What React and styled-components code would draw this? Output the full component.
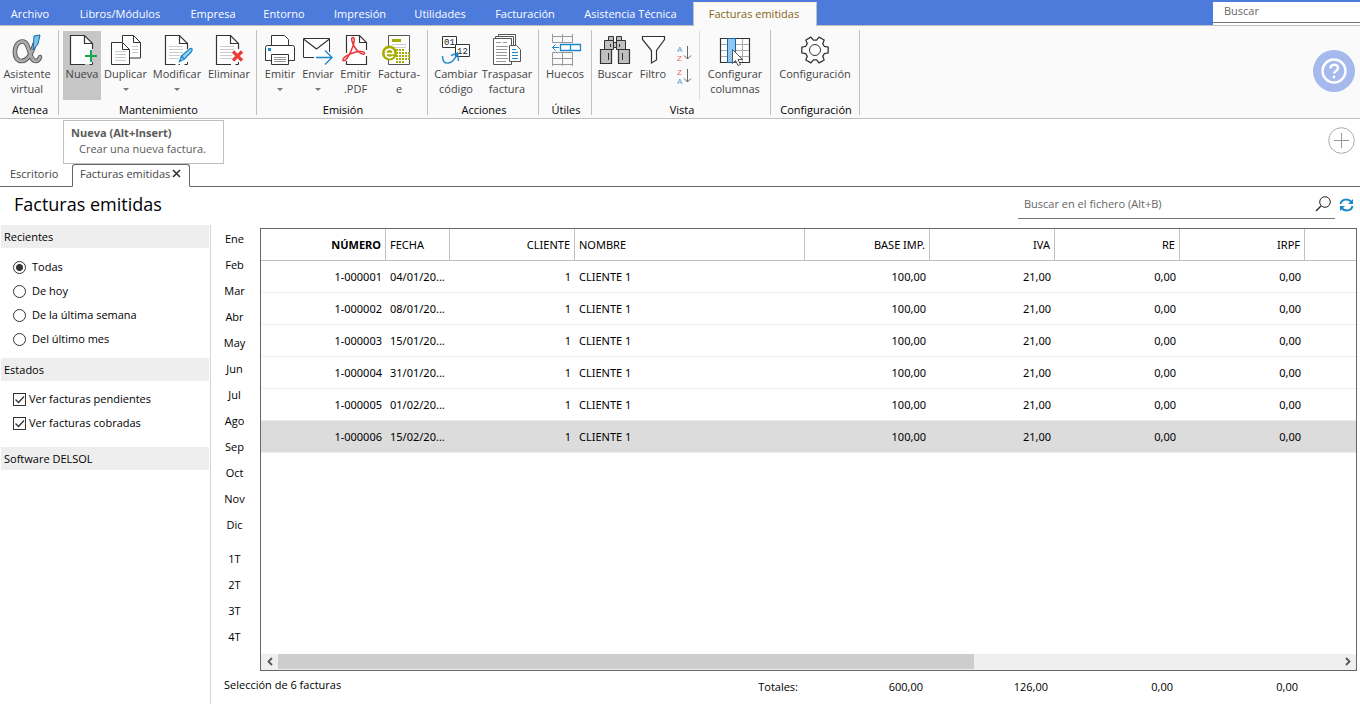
import React from "react";
import styled, { createGlobalStyle, css } from "styled-components";

const Global = createGlobalStyle`
  * { box-sizing: border-box; }
  body { margin: 0; background: #fff; color: #000; font: 11px/15px "Open Sans", "Noto Sans", sans-serif; }
  button, input { font: inherit; color: inherit; }
  button { padding: 0; border: 0; background: none; cursor: default; }
  h1, h2 { margin: 0; font-weight: 400; }
`;

const Shell = styled.div`
  display: flex;
  flex-direction: column;
  min-height: 100vh;
`;

/* ---------- menu bar ---------- */
const MenuBar = styled.nav`
  display: flex;
  height: 25px;
  background: #4d7bdc;
`;
const MenuItem = styled.button`
  flex: none;
  width: ${(p) => p.$width}px;
  height: 25px;
  padding-top: 2px;
  color: #fff;
  white-space: nowrap;
  ${(p) =>
    p.$active &&
    css`
      height: 24px;
      margin-top: 2px;
      padding: 0 2px 2px 0;
      background: #fafafa;
      color: #87640f;
      border: 1px solid #c0c0c0;
      border-top-color: #fbf3dc;
      border-bottom: 0;
      position: relative;
    `}
`;
const MenuSearch = styled.div`
  width: 147px;
  height: 23px;
  margin: 2px 0 0 auto;
  padding-bottom: 2px;
  background: #fff;
  input {
    display: block;
    width: 100%;
    height: 21px;
    padding: 0 11px 4px;
    border: 0;
    border-bottom: 1px solid #777;
    outline: 0;
    background: #fff;
  }
  input::placeholder { color: #666; opacity: 1; }
`;

/* ---------- ribbon ---------- */
const Ribbon = styled.section`
  display: flex;
  height: 94px;
  background: #fafafa;
  border-top: 1px solid #c0c0c0;
  border-bottom: 1px solid #c0c0c0;
`;
const Group = styled.div`
  flex: none;
  display: flex;
  flex-direction: column;
  justify-content: space-between;
  width: ${(p) => p.$width}px;
  height: 85px;
  margin-top: 4px;
  border-right: 1px solid #c0c0c0;
`;
const GroupBody = styled.div`
  display: flex;
  padding: ${(p) => (p.$flush ? "1px 0 0" : "1px 0 0 4px")};
`;
const GroupName = styled.div`
  padding-left: 2px;
  text-align: center;
  height: 12px;
  line-height: 13px;
`;
const Tool = styled.button`
  flex: none;
  display: flex;
  flex-direction: column;
  align-items: center;
  width: ${(p) => p.$width}px;
  height: 69px;
  padding-top: 2px;
  color: #444;
  background: ${(p) => (p.$active ? "#c6c6c6" : "transparent")};
  svg { flex: none; display: block; }
`;
const ToolText = styled.span`
  display: block;
  margin-top: -1px;
  white-space: nowrap;
  text-align: center;
`;
const Caret = styled.i`
  margin-top: 7px;
  border: 3px solid transparent;
  border-top-color: #777;
  border-bottom: 0;
`;
const SortStack = styled.div`
  display: flex;
  flex-direction: column;
  gap: 3px;
  width: 28px;
  padding: 13px 0 0 3px;
  border-right: 1px solid #dcdcdc;
  margin-right: 3px;
  svg { display: block; }
`;
const HelpButton = styled.button`
  width: 42px;
  height: 42px;
  margin: 24px 5px 0 auto;
  border-radius: 50%;
  background: #a5b9ec;
  svg { display: block; }
`;

/* ---------- document tabs ---------- */
const TabStrip = styled.div`
  position: relative;
  display: flex;
  align-items: flex-end;
  height: 68px;
`;
const DocTab = styled.div`
  display: flex;
  align-items: center;
  gap: 2px;
  height: 23px;
  color: #444;
  border-bottom: 1px solid #666;
  ${(p) =>
    p.$active
      ? css`
          width: 118px;
          padding: 0 7px 4px;
          border: 1px solid #666;
          border-bottom-color: transparent;
          border-radius: 3px 3px 0 0;
        `
      : css`
          width: 72px;
          padding: 0 0 3px 10px;
        `}
  button { white-space: nowrap; }
  svg { display: block; }
`;
const StripRest = styled.div`
  flex: 1;
  display: flex;
  justify-content: flex-end;
  align-items: flex-start;
  height: 68px;
  padding: 7px 5px 0;
  border-bottom: 1px solid #666;
  svg { display: block; }
`;
const Tooltip = styled.div`
  position: absolute;
  left: 63px;
  top: 1px;
  width: 161px;
  height: 44px;
  padding: 4px 7px;
  background: #fff;
  border: 1px solid #c0c0c0;
  color: #5a5a5a;
  line-height: 16px;
  b { display: block; font-weight: 700; }
  span { padding-left: 8px; }
`;

/* ---------- heading ---------- */
const Heading = styled.header`
  display: flex;
  justify-content: space-between;
  height: 38px;
  padding: 0 6px 0 14px;
  h1 { font-size: 18px; line-height: 35px; }
`;
const Finder = styled.div`
  display: flex;
  height: 32px;
  label {
    display: flex;
    align-items: center;
    width: 317px;
    padding: 2px 4px 0 6px;
    border-bottom: 1px solid #777;
  }
  input { flex: 1; min-width: 0; padding: 0; border: 0; outline: 0; background: none; }
  input::placeholder { color: #666; opacity: 1; }
  > button { display: flex; align-items: center; padding: 4px 0 0 4px; }
`;

/* ---------- body ---------- */
const Body = styled.main`
  flex: 1;
  display: flex;
`;
const Sidebar = styled.aside`
  flex: none;
  width: 211px;
  padding: 0 1px;
  border-right: 1px solid #d4d4d4;
`;
const Section = styled.section`
  h2 {
    height: 23px;
    padding-left: 3px;
    font-size: 11px;
    line-height: 24px;
    background: #eee;
  }
`;
const Options = styled.div`
  padding: ${(p) => (p.$checks ? "6px 0 12px 12px" : "7px 0 7px 12px")};
`;
const Option = styled.label`
  display: flex;
  align-items: center;
  gap: ${(p) => (p.$tight ? 3 : 6)}px;
  height: 24px;
  input {
    appearance: none;
    width: 13px;
    height: 13px;
    margin: 0;
    border: 1px solid #333;
    background: #fff;
  }
  input[type="radio"] { border-radius: 50%; }
  input[type="radio"]:checked { background: radial-gradient(circle, #333 3px, #fff 4px); }
`;
const OptionText = styled.span`
  padding-bottom: 2px;
`;
const CheckWrap = styled.span`
  display: grid;
  > * { grid-area: 1 / 1; }
  svg { pointer-events: none; z-index: 1; }
`;
const Periods = styled.div`
  flex: none;
  display: flex;
  flex-direction: column;
  width: 49px;
  padding-right: 2px;
`;
const Period = styled.button`
  height: 26px;
  margin-top: ${(p) => (p.$first ? 8 : 0)}px;
`;
const Right = styled.div`
  flex: 1;
  min-width: 0;
  display: flex;
  flex-direction: column;
`;
const Upper = styled.div`
  flex: 1;
  display: flex;
`;
const Frame = styled.div`
  flex: 1;
  min-width: 0;
  display: flex;
  flex-direction: column;
  justify-content: space-between;
  margin: 3px 3px 0 0;
  border: 1px solid #666;
`;
const Table = styled.table`
  width: 100%;
  table-layout: fixed;
  border-collapse: separate;
  border-spacing: 0;
  font-family: "Noto Sans", "Open Sans", sans-serif;
`;
const cell = css`
  height: 32px;
  padding: 0 4px 1px;
  text-align: ${(p) => (p.$left ? "left" : "right")};
  white-space: nowrap;
  overflow: hidden;
`;
const Th = styled.th`
  ${cell}
  font-weight: ${(p) => (p.$bold ? 700 : 400)};
  border-right: 1px solid #c0c0c0;
  border-bottom: 1px solid #c0c0c0;
  &:last-child { border-right: 0; }
`;
const Td = styled.td`
  ${cell}
  border-bottom: 1px solid #ededed;
`;
const Tr = styled.tr`
  background: ${(p) => (p.$selected ? "#dcdcdc" : "#fff")};
`;
const ScrollBar = styled.div`
  display: flex;
  height: 16px;
  padding-bottom: 1px;
  background: #efefef;
  button { display: grid; place-items: center; width: 17px; }
  svg { display: block; }
`;
const Track = styled.div`
  flex: 1;
  i { display: block; width: 65.6%; height: 15px; background: #cdcdcd; }
`;
const Footer = styled.footer`
  display: flex;
  height: 33px;
  padding-left: 13px;
  line-height: 28px;
`;
const Total = styled.span`
  width: 125px;
  padding-top: 2px;
  text-align: right;
`;
const Summary = styled.span`
  width: 449px;
`;

/* ---------- icons ---------- */
const Icon = ({ children, w = 36, h = 34 }) => (
  <svg width={w} height={h} viewBox={`0 0 ${w} ${h}`} fill="none" aria-hidden="true">
    {children}
  </svg>
);
const K = "#333";
const BLUE = "#1e88cc";

const alpha = "M25.500 11C23 21 18 28 12.500 28C3 28 4 8.500 13.500 8.500C21.500 8.500 19.500 28 26.500 28C29 28 30.500 26 31 24";
const AlphaIcon = () => (
  <Icon>
    <g strokeLinecap="round">
      <path d={alpha} stroke="#555" strokeWidth="4.600" />
      <path d={alpha} stroke="#aaa" strokeWidth="2.800" />
    </g>
    <path d="M25 3L31 2L29 11L24 17Z" fill="#7cc2ee" stroke="#1767a8" />
  </Icon>
);
const Page = ({ x = 6 }) => (
  <>
    <path d={`M${x + 0.5} 2.5h14l8 8v20.5h-22z`} fill="#fff" />
    <path d={`M${x + 22.5} 16V10.5L${x + 14.5} 2.5H${x + 0.5}V31.5H${x + 15}`} stroke={K} strokeWidth="1.2" />
    <path d={`M${x + 22.5} 29v2.5h-3`} stroke={K} />
    <path d={`M${x + 14.5} 3v7.500h8`} stroke={K} strokeWidth="1.2" />
  </>
);
const NewIcon = () => (
  <Icon>
    <Page />
    <path d="M27 17v12M21 23h12" stroke="#c6c6c6" strokeWidth="4" />
    <path d="M20 17h7v6h-7z" fill="#fff" />
    <path d="M20 23h6v6h-6z" fill="#fff" />
    <path d="M27 17v12M21 23h12" stroke="#12a84c" strokeWidth="2" />
  </Icon>
);
const Lines = ({ x, y, n, w = 14 }) => (
  <path d={Array.from({ length: n }, (_, i) => `M${x} ${y + i * 3 + 0.5}h${w}`).join("")} stroke="#ccc" />
);
const CopyIcon = () => (
  <Icon>
    <path d="M14.500 9V2.500h11l7 7v15.500h-11" fill="#fff" stroke={K} />
    <path d="M25.500 3v6.500h7" stroke={K} />
    <Lines x={24} y={13} n={3} w={6} />
    <path d="M3.500 9.500h11l7 7v15h-18z" fill="#fff" stroke={K} />
    <path d="M14.500 10v6.500h7" stroke={K} />
    <Lines x={7} y={18} n={4} w={11} />
  </Icon>
);
const EditIcon = () => (
  <Icon>
    <Page />
    <Lines x={10} y={13} n={5} w={14} />
    <path d="M20 29l3-6L31 17l2 1-8 8z" fill="#fff" stroke="#fff" strokeWidth="4" />
    <path d="M20.500 28.500l2-5.500L30.500 16q2-1 2.500 0t-.5 2.500l-7 7.500zM22.500 23l3 3" fill="#9bd0f2" stroke={BLUE} strokeWidth="1.3" />
  </Icon>
);
const DeleteIcon = () => (
  <Icon>
    <Page x={5} />
    <Lines x={9} y={13} n={5} w={14} />
    <path d="M22 19l9 8M31 19l-9 8" stroke="#fff" strokeWidth="6" />
    <path d="M22 18.500l9 9M31 18.500l-9 9" stroke="#ee3b3b" strokeWidth="3.2" />
  </Icon>
);
const PrintIcon = () => (
  <Icon>
    <path d="M9.500 12V2.500h13l4 4V12" fill="#fff" stroke={K} />
    <path d="M9.500 27.500h-6v-13q0-2 2-2h25q2 0 2 2v13h-6" fill="#fff" stroke={K} />
    <path d="M9.500 21.500h17v10h-17z" fill="#fff" stroke={K} />
    <path d="M12 24.500h12M12 26.500h12M12 28.500h12" stroke="#999" />
    <path d="M6 15h3v3h-3z" fill={BLUE} />
  </Icon>
);
const MailIcon = () => (
  <Icon>
    <path d="M14 24.500H3.500V5.500h26V20" fill="#fff" />
    <path d="M14 24.500H3.500V5.500h26V19" stroke={K} />
    <path d="M3.500 6l13 10 13-10" stroke={K} strokeWidth="1.2" />
    <path d="M16 24.500h16M25 17.500l7 7-7 7" stroke={BLUE} strokeWidth="1.4" />
  </Icon>
);
const PdfIcon = () => (
  <Icon>
    <path d="M8.500 2.500h13l7 7v22h-20z" fill="#fff" />
    <path d="M8.500 20V2.500h13l7 7V17M28.500 23v8.500h-20V28M21.500 3v6.500h7" stroke={K} strokeWidth="1.2" />
    <path d="M5 27.500c-1-3 7-7 13-8.500 5-1 9-.5 8.500 1.500-1.500 2-7-1.500-10-6.500C14 9.500 12.500 4.500 15 4.500c2.500 0 1 7-2 13.500-2 5-6 11-8 9.500z" stroke="#e83434" strokeWidth="1.500" />
  </Icon>
);
const dots = [];
for (let r = 0; r < 5; r++)
  for (let c = 0; c < 5; c++) if (r % 4 || c < 3) dots.push([15 + c * 3, 16 + r * 3]);
const EInvoiceIcon = () => (
  <Icon>
    <path d="M7.500 2.500h21v29h-21z" fill="#fff" stroke="#555" />
    <Lines x={11} y={11} n={2} w={14} />
    <path d="M11 6h9v3h-9z" fill="#a6ac00" />
    <circle cx="8.500" cy="20" r="7.500" fill="#a6ac00" />
    <path d="M4.500 20.500h8c0-6-8-5.500-8 0c0 4.500 5.500 5 7.500 2.500" stroke="#fff" strokeWidth="1.700" />
    {dots.map(([x, y]) => (
      <rect key={`${x}-${y}`} x={x} y={y} width="2" height="2" fill="#a6ac00" />
    ))}
  </Icon>
);
const CodeIcon = () => (
  <Icon>
    <path d="M4.500 3.500h14v11h-14z" fill="#fff" stroke={K} />
    <path d="M17.500 11.500h14v12h-14z" fill="#fff" stroke={K} />
    <g fontFamily="Liberation Mono, monospace" fontSize="9" fill="#222">
      <text x="6" y="12">01</text>
      <text x="19" y="21">12</text>
    </g>
    <path d="M4.500 23q0 8 6 7c5-1 7-5 8.500-9M13 22.500l6.500-2.500 1 8" stroke={BLUE} strokeWidth="1.4" />
  </Icon>
);
const TransferIcon = () => (
  <Icon>
    <path d="M9.500 3V1.500h17V12" fill="#fff" stroke="#555" />
    <path d="M6.500 5V3.500h18V12" fill="#fff" stroke="#555" />
    <path d="M4.500 5.500h18v26h-18z" fill="#fff" stroke="#555" />
    <path d="M7 9.500h5M14 9.500h4M7 13.500h12M7 16.500h11M7 19.500h11M7 22.500h11M7 25.500h12M7 28.500h10" stroke="#999" />
    <path d="M20.500 12.500h7l4 4v12h-11z" fill="#fff" stroke="#555" />
    <path d="M23 16.500h4M23 19.500h6M23 22.500h6M23 25.500h6" stroke={BLUE} />
  </Icon>
);
const GapsIcon = () => (
  <Icon>
    <path d="M5.500 1v8.500h20V1M5.500 3.500h20M15.500 1v8M5.500 33V19.500h20V33M5.500 25.500h20M5.500 31.500h20M15.500 20v13" stroke="#999" />
    <path d="M13.500 11.500h20v6h-20zM23.500 11.500v6" fill="#fff" stroke={BLUE} strokeWidth="1.3" />
    <path d="M12 14.500H5.500M8.500 11.500l-3 3 3 3" stroke={BLUE} />
  </Icon>
);
const BinocularsIcon = () => (
  <Icon>
    <path d="M11.500 3.500h5v4h-5zM19.500 3.500h5v4h-5zM7.500 7.500h9v9h-9zM19.500 7.500h9v9h-9zM16.500 9.500h3v5h-3z" fill="#c2c0be" stroke={K} />
    <path d="M3.500 16.500h11v14h-11zM21.500 16.500h11v14h-11z" fill="#c2c0be" stroke={K} strokeWidth="1.2" />
    <path d="M11.500 20v7M25.500 20v7M13.500 11v3M22.500 11v3" stroke={K} />
  </Icon>
);
const FunnelIcon = () => (
  <Icon>
    <path d="M7.500 3.500h22v3l-8 11V27l-5 3V17.500l-9-11z" fill="#fff" stroke={K} strokeWidth="1.2" />
  </Icon>
);
const SortIcon = ({ top, bottom, topColor, bottomColor }) => (
  <svg width="20" height="20" viewBox="0 0 20 20" fill="none" aria-hidden="true">
    <g fontFamily="Liberation Sans, sans-serif" fontSize="8">
      <text x="2" y="8" fill={topColor}>{top}</text>
      <text x="2" y="17" fill={bottomColor}>{bottom}</text>
    </g>
    <path d="M12.500 2v13M9 11.500l3.500 3.500 3.500-3.500" stroke="#666" />
  </svg>
);
const ColumnsIcon = () => (
  <Icon>
    <path d="M3.500 5.500h29v24h-29z" fill="#fff" stroke={K} strokeWidth="1.2" />
    <path d="M4 11.500h28M4 17.500h28M4 23.500h28M25.500 6v23M18.500 6v23" stroke="#aaa" />
    <path d="M10.500 5.500h8v24h-8z" fill="#90c8f2" stroke="#1565a8" />
    <path d="M15.500 16.500v14l3-3 2.500 5 2.500-1-2.500-5h4.500z" fill="#fff" stroke="#555" />
  </Icon>
);
const gearPath = (() => {
  const p = [];
  for (let i = 0; i < 6; i++) {
    const a = (i * Math.PI) / 3;
    [[-0.36, 10], [-0.22, 13.5], [0.22, 13.5], [0.36, 10]].forEach(([d, r]) =>
      p.push(`${(18 + r * Math.cos(a + d)).toFixed(2)} ${(17 + r * Math.sin(a + d)).toFixed(2)}`)
    );
  }
  return `M${p.join("L")}Z`;
})();
const GearIcon = () => (
  <Icon>
    <path d={gearPath} fill="#fff" stroke={K} strokeWidth="1.300" strokeLinejoin="round" />
    <circle cx="18" cy="17" r="5.500" stroke={K} />
  </Icon>
);
const HelpIcon = () => (
  <svg width="42" height="42" viewBox="0 0 42 42" fill="none" aria-hidden="true">
    <circle cx="21" cy="21" r="11.500" stroke="#fff" strokeWidth="2.400" />
    <path d="M17.500 18.500c0-5 7.500-5 7.500-.5 0 3-4 2.800-4 5.500" stroke="#fff" strokeWidth="2.400" />
    <circle cx="21" cy="27" r="1.400" fill="#fff" />
  </svg>
);
const AddIcon = () => (
  <svg width="28" height="28" viewBox="0 0 28 28" fill="none" aria-hidden="true">
    <circle cx="14.500" cy="14.500" r="12.800" stroke="#aaa" />
    <path d="M14.500 7v15M7 14.500h15" stroke="#999" />
  </svg>
);
const CloseIcon = () => (
  <svg width="9" height="9" viewBox="0 0 9 9" aria-hidden="true">
    <path d="M1 1l7 7M8 1L1 8" stroke="#333" strokeWidth="1.600" />
  </svg>
);
const LensIcon = () => (
  <svg width="16" height="16" viewBox="0 0 16 16" fill="none" aria-hidden="true">
    <circle cx="10" cy="6" r="5.300" stroke="#222" />
    <path d="M6 10l-5 5" stroke="#222" strokeWidth="1.300" />
  </svg>
);
const RefreshIcon = () => (
  <svg width="15" height="14" viewBox="0 0 15 14" fill="none" aria-hidden="true">
    <path d="M1.500 6C2.500 1 9 0 12.500 4M13.500 8C12.500 13 6 14 2.500 10" stroke="#1e88cc" strokeWidth="2" />
    <path d="M14 1v5h-5zM1 13V8h5z" fill="#1e88cc" />
  </svg>
);
const CheckMark = () => (
  <svg width="13" height="13" viewBox="0 0 13 13" fill="none" aria-hidden="true">
    <path d="M2.500 6.500l3 3 5.500-6" stroke="#333" strokeWidth="1.300" />
  </svg>
);
const Chevron = ({ right }) => (
  <svg width="8" height="9" viewBox="0 0 8 9" fill="none" aria-hidden="true">
    <path d={right ? "M2 1l3.500 3.500L2 8" : "M6 1L2.500 4.500 6 8"} stroke="#555" strokeWidth="1.800" />
  </svg>
);

/* ---------- data ---------- */
const menu = [
  ["Archivo", 60], ["Libros/Módulos", 120], ["Empresa", 66], ["Entorno", 76], ["Impresión", 76],
  ["Utilidades", 84], ["Facturación", 86], ["Asistencia Técnica", 125], ["Facturas emitidas", 124, true],
];
const groups = [
  { name: "Atenea", width: 59, flush: true, tools: [["Asistente\nvirtual", 54, AlphaIcon]] },
  {
    name: "Mantenimiento", width: 198,
    tools: [["Nueva", 38, NewIcon, { active: true }], ["Duplicar", 49, CopyIcon, { caret: true }],
      ["Modificar", 54, EditIcon, { caret: true }], ["Eliminar", 50, DeleteIcon]],
  },
  {
    name: "Emisión", width: 171,
    tools: [["Emitir", 38, PrintIcon, { caret: true }], ["Enviar", 38, MailIcon, { caret: true }],
      ["Emitir\n.PDF", 37, PdfIcon], ["Factura-\ne", 50, EInvoiceIcon]],
  },
  { name: "Acciones", width: 111, tools: [["Cambiar\ncódigo", 48, CodeIcon], ["Traspasar\nfactura", 54, TransferIcon]] },
  { name: "Útiles", width: 53, tools: [["Huecos", 44, GapsIcon]] },
  {
    name: "Vista", width: 179, sort: true,
    tools: [["Buscar", 38, BinocularsIcon], ["Filtro", 38, FunnelIcon], ["Configurar\ncolumnas", 64, ColumnsIcon]],
  },
  { name: "Configuración", width: 89, tools: [["Configuración", 80, GearIcon]] },
];
const months = ["Ene", "Feb", "Mar", "Abr", "May", "Jun", "Jul", "Ago", "Sep", "Oct", "Nov", "Dic"];
const quarters = ["1T", "2T", "3T", "4T"];
const columns = [
  ["NÚMERO", 125], ["FECHA", 64, true], ["CLIENTE", 125], ["NOMBRE", 230, true],
  ["BASE IMP.", 125], ["IVA", 125], ["RE", 125], ["IRPF", 125], ["", null],
];
const rows = [
  ["1-000001", "04/01/20..."], ["1-000002", "08/01/20..."], ["1-000003", "15/01/20..."],
  ["1-000004", "31/01/20..."], ["1-000005", "01/02/20..."], ["1-000006", "15/02/20..."],
].map((r) => [...r, "1", "CLIENTE 1", "100,00", "21,00", "0,00", "0,00", ""]);
const recent = ["Todas", "De hoy", "De la última semana", "Del último mes"];
const states = ["Ver facturas pendientes", "Ver facturas cobradas"];
const totals = ["Totales:", "600,00", "126,00", "0,00", "0,00"];

const RibbonTool = ({ tool: [label, width, Glyph, opts = {}] }) => (
  <Tool type="button" $width={width} $active={opts.active}>
    <Glyph />
    <ToolText>
      {label.split("\n").map((t, i) => (
        <React.Fragment key={t}>{i > 0 && <br />}{t}</React.Fragment>
      ))}
    </ToolText>
    {opts.caret && <Caret />}
  </Tool>
);

export default function App() {
  return (
    <Shell>
      <Global />
      <MenuBar>
        {menu.map(([label, width, active]) => (
          <MenuItem key={label} type="button" $width={width} $active={active}>{label}</MenuItem>
        ))}
        <MenuSearch><input type="text" placeholder="Buscar" aria-label="Buscar" /></MenuSearch>
      </MenuBar>

      <Ribbon>
        {groups.map((g) => (
          <Group key={g.name} $width={g.width}>
            <GroupBody $flush={g.flush}>
              {g.tools.map((t, i) => (
                <React.Fragment key={t[0]}>
                  {g.sort && i === 2 && (
                    <SortStack>
                      <button type="button" aria-label="Orden ascendente">
                        <SortIcon top="A" bottom="Z" topColor="#4a9fd8" bottomColor="#ee5a5a" />
                      </button>
                      <button type="button" aria-label="Orden descendente">
                        <SortIcon top="Z" bottom="A" topColor="#ee5a5a" bottomColor="#4a9fd8" />
                      </button>
                    </SortStack>
                  )}
                  <RibbonTool tool={t} />
                </React.Fragment>
              ))}
            </GroupBody>
            <GroupName>{g.name}</GroupName>
          </Group>
        ))}
        <HelpButton type="button" aria-label="Ayuda"><HelpIcon /></HelpButton>
      </Ribbon>

      <TabStrip>
        <DocTab><button type="button">Escritorio</button></DocTab>
        <DocTab $active>
          <button type="button">Facturas emitidas</button>
          <button type="button" aria-label="Cerrar"><CloseIcon /></button>
        </DocTab>
        <StripRest><button type="button" aria-label="Añadir"><AddIcon /></button></StripRest>
        <Tooltip role="tooltip"><b>Nueva (Alt+Insert)</b><span>Crear una nueva factura.</span></Tooltip>
      </TabStrip>

      <Heading>
        <h1>Facturas emitidas</h1>
        <Finder>
          <label>
            <input type="text" placeholder="Buscar en el fichero (Alt+B)" aria-label="Buscar en el fichero" />
            <LensIcon />
          </label>
          <button type="button" aria-label="Actualizar"><RefreshIcon /></button>
        </Finder>
      </Heading>

      <Body>
        <Sidebar>
          <Section>
            <h2>Recientes</h2>
            <Options>
              {recent.map((label, i) => (
                <Option key={label}>
                  <input type="radio" name="recent" defaultChecked={i === 0} />
                  <OptionText>{label}</OptionText>
                </Option>
              ))}
            </Options>
          </Section>
          <Section>
            <h2>Estados</h2>
            <Options $checks>
              {states.map((label) => (
                <Option key={label} $tight>
                  <CheckWrap><input type="checkbox" defaultChecked /><CheckMark /></CheckWrap>
                  <OptionText>{label}</OptionText>
                </Option>
              ))}
            </Options>
          </Section>
          <Section><h2>Software DELSOL</h2></Section>
        </Sidebar>
        <Right>
          <Upper>
            <Periods>
              {months.map((m) => <Period key={m} type="button">{m}</Period>)}
              {quarters.map((q, i) => <Period key={q} type="button" $first={i === 0}>{q}</Period>)}
            </Periods>
            <Frame>
              <Table>
                <colgroup>
                  {columns.map(([name, w]) => <col key={name} width={w ?? undefined} />)}
                </colgroup>
                <thead>
                  <tr>
                    {columns.map(([name, , left], i) => <Th key={name} $left={left} $bold={i === 0}>{name}</Th>)}
                  </tr>
                </thead>
                <tbody>
                  {rows.map((r, i) => (
                    <Tr key={r[0]} $selected={i === 5}>
                      {r.map((v, c) => <Td key={c} $left={columns[c][2]}>{v}</Td>)}
                    </Tr>
                  ))}
                </tbody>
              </Table>
              <ScrollBar>
                <button type="button" aria-label="Desplazar a la izquierda"><Chevron /></button>
                <Track><i /></Track>
                <button type="button" aria-label="Desplazar a la derecha"><Chevron right /></button>
              </ScrollBar>
            </Frame>
          </Upper>
          <Footer>
            <Summary>Selección de 6 facturas</Summary>
            {totals.map((t, i) => <Total key={i}>{t}</Total>)}
          </Footer>
        </Right>
      </Body>
    </Shell>
  );
}
